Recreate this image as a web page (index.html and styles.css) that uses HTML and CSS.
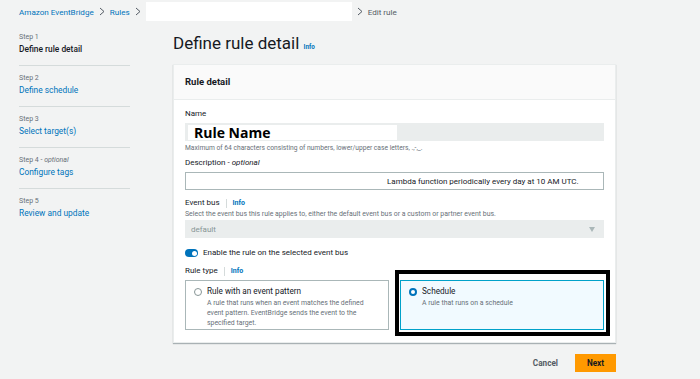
FILE: index.html
```html
<!DOCTYPE html>
<html lang="en">

<head>
    <meta charset="UTF-8">
    <meta name="viewport" content="width=device-width, initial-scale=1.0">
    <title>Edit rule - Amazon EventBridge</title>
    <link rel="stylesheet" href="styles.css">
</head>

<body>
    <nav class="breadcrumbs">
        <a class="crumb" href="#">Amazon EventBridge</a>
        <svg class="chevron" viewBox="0 0 6 9"><path d="M1 1l4 3.5L1 8" /></svg>
        <a class="crumb" href="#">Rules</a>
        <svg class="chevron" viewBox="0 0 6 9"><path d="M1 1l4 3.5L1 8" /></svg>
        <span class="crumb-hidden"></span>
        <svg class="chevron" viewBox="0 0 6 9"><path d="M1 1l4 3.5L1 8" /></svg>
        <span class="crumb-current">Edit rule</span>
    </nav>

    <div class="layout">
        <aside class="steps">
            <div class="step">
                <div class="step-label">Step 1</div>
                <div class="step-title current">Define rule detail</div>
            </div>
            <div class="step">
                <div class="step-label">Step 2</div>
                <a class="step-title" href="#">Define schedule</a>
            </div>
            <div class="step">
                <div class="step-label">Step 3</div>
                <a class="step-title" href="#">Select target(s)</a>
            </div>
            <div class="step">
                <div class="step-label">Step 4 - <i>optional</i></div>
                <a class="step-title" href="#">Configure tags</a>
            </div>
            <div class="step last">
                <div class="step-label">Step 5</div>
                <a class="step-title" href="#">Review and update</a>
            </div>
        </aside>

        <main class="main">
            <h1 class="page-title">Define rule detail <a class="info" href="#">Info</a></h1>

            <section class="panel">
                <div class="panel-header">Rule detail</div>
                <div class="panel-body">
                    <div class="label name-label">Name</div>
                    <div class="input disabled name-input">
                        <span class="name-value">Rule Name</span>
                    </div>
                    <div class="hint">Maximum of 64 characters consisting of numbers, lower/upper case letters, .,-,_.</div>

                    <div class="label desc-label">Description -&nbsp;<i>optional</i></div>
                    <div class="input desc-input">Lambda function periodically every day at 10 AM UTC.</div>

                    <div class="label bus-label">Event bus <span class="divider"></span><a class="info" href="#">Info</a></div>
                    <div class="hint bus-hint">Select the event bus this rule applies to, either the default event bus or a custom or partner event bus.</div>
                    <div class="input disabled select">
                        <span>default</span>
                        <span class="caret"></span>
                    </div>

                    <div class="toggle-row">
                        <span class="toggle"></span>
                        <span>Enable the rule on the selected event bus</span>
                    </div>

                    <div class="label type-label">Rule type <span class="divider"></span><a class="info" href="#">Info</a></div>
                    <div class="tiles">
                        <div class="tile">
                            <span class="radio"></span>
                            <div>
                                <div class="tile-title">Rule with an event pattern</div>
                                <div class="tile-desc">A rule that runs when an event matches the defined event pattern. EventBridge sends the event to the specified target.</div>
                            </div>
                        </div>
                        <div class="tile selected">
                            <span class="radio"></span>
                            <div>
                                <div class="tile-title">Schedule</div>
                                <div class="tile-desc">A rule that runs on a schedule</div>
                            </div>
                        </div>
                    </div>
                </div>
            </section>

            <div class="actions">
                <a class="cancel" href="#">Cancel</a>
                <button class="next">Next</button>
            </div>
        </main>
    </div>
</body>

</html>
```

FILE: styles.css
```css
body {
    margin: 0;
    background: #f2f3f3;
    font-family: Roboto, 'Open Sans', sans-serif;
    color: #16191f;
}

a {
    color: #0073bb;
    text-decoration: none;
}

.breadcrumbs {
    height: 23px;
    display: flex;
    align-items: center;
    padding-left: 19px;
    font-size: 8.1px;
}

.chevron {
    width: 6px;
    height: 9px;
    margin: 0 5px;
    fill: none;
    stroke: #545b64;
    stroke-width: 1;
}

.crumb-hidden {
    width: 206px;
    height: 19px;
    background: white;
}

.crumb-current {
    color: #545b64;
}

.layout {
    display: flex;
}

.steps {
    width: 111px;
    margin-left: 19px;
    padding-top: 2px;
}

.step {
    padding: 6px 0 9px;
    border-bottom: 1px solid #d5dbdb;
}

.step.last {
    border-bottom: none;
}

.step-label {
    font-size: 7px;
    line-height: 12px;
    color: #687078;
}

.step-title {
    display: block;
    font-size: 8.4px;
    line-height: 13px;
}

.step-title.current {
    color: #16191f;
    font-weight: 500;
}

.main {
    margin-left: 43px;
    width: 443px;
}

.page-title {
    margin: 8px 0 9px;
    font-size: 17px;
    line-height: 24px;
    font-weight: 400;
}

.info {
    font-size: 6.3px;
    line-height: 1;
    font-weight: 700;
}

.panel {
    background: white;
    border: 1px solid #eaeded;
    box-shadow: 0 1px 1px rgba(0, 28, 36, 0.3);
}

.panel-header {
    background: #fafafa;
    border-bottom: 1px solid #eaeded;
    padding: 9px 11px 10px;
    font-size: 9.5px;
    line-height: 15px;
    font-weight: 700;
}

.panel-body {
    padding: 8px 11px 12px;
}

.label {
    font-size: 8px;
    line-height: 12px;
    display: flex;
    align-items: center;
}

.divider {
    width: 1px;
    height: 9px;
    background: #d5dbdb;
    margin: 0 6px;
}

.label .info {
    font-size: 7px;
}

.hint {
    font-size: 6.7px;
    line-height: 10px;
    color: #687078;
}

.bus-hint {
    font-size: 6.95px;
}

.input {
    height: 18px;
    box-sizing: border-box;
    border: 1px solid #aab7b8;
    font-size: 8px;
    display: flex;
    align-items: center;
}

.disabled {
    background: #eaeded;
    border-color: #eaeded;
}

.name-input {
    margin-top: 3px;
    padding-left: 2px;
}

.name-value {
    width: 203px;
    height: 15px;
    background: white;
    padding-left: 6px;
    font-family: 'Open Sans', sans-serif;
    font-size: 14px;
    font-weight: 700;
    line-height: 15px;
    color: #000;
}

.name-input + .hint {
    margin-top: 2px;
}

.desc-label {
    margin-top: 4px;
}

.desc-input {
    margin-top: 3px;
    padding-left: 201px;
    color: #16191f;
}

.bus-label {
    margin-top: 7px;
}

.select {
    margin-top: 1px;
    padding: 0 8px 0 5px;
    justify-content: space-between;
    color: #879596;
}

.caret {
    width: 0;
    height: 0;
    border-left: 3.5px solid transparent;
    border-right: 3.5px solid transparent;
    border-top: 5px solid #aab7b8;
}

.toggle-row {
    margin-top: 9px;
    display: flex;
    align-items: center;
    gap: 5px;
    font-size: 8px;
    line-height: 12px;
}

.toggle {
    position: relative;
    width: 13px;
    height: 8px;
    border-radius: 4px;
    background: #0073bb;
}

.toggle::after {
    content: '';
    position: absolute;
    right: 1.5px;
    top: 1.5px;
    width: 5px;
    height: 5px;
    border-radius: 50%;
    background: white;
}

.type-label {
    margin-top: 6px;
}

.tiles {
    margin-top: 3px;
    display: grid;
    grid-template-columns: 1fr 1fr;
    gap: 11px;
}

.tile {
    position: relative;
    height: 50px;
    box-sizing: border-box;
    border: 1px solid #aab7b8;
    padding: 5px 8px;
    display: flex;
    gap: 5px;
}

.tile.selected {
    background: #f1faff;
    border-color: #00a1c9;
}

/* annotation frame drawn over the selected tile */
.tile.selected::before {
    content: '';
    position: absolute;
    left: -6px;
    right: -7px;
    top: -11px;
    bottom: -7px;
    border: 4px solid #000;
}

.radio {
    flex: none;
    width: 8px;
    height: 8px;
    box-sizing: border-box;
    border: 1px solid #879596;
    border-radius: 50%;
    margin-top: 2px;
    background: white;
}

.selected .radio {
    border: 2.5px solid #0073bb;
}

.tile-title {
    font-size: 8.2px;
    line-height: 11px;
}

.tile-desc {
    max-width: 162px;
    margin-top: 1px;
    font-size: 6.9px;
    line-height: 10px;
    color: #687078;
}

.actions {
    margin-top: 11px;
    display: flex;
    justify-content: flex-end;
    align-items: center;
    gap: 17px;
}

.cancel {
    color: #545b64;
    font-size: 8.2px;
    font-weight: 700;
}

.next {
    width: 41px;
    height: 18px;
    border: none;
    background: #ff9900;
    color: #16191f;
    font-family: inherit;
    font-size: 8.2px;
    font-weight: 700;
    padding: 0;
}
```
